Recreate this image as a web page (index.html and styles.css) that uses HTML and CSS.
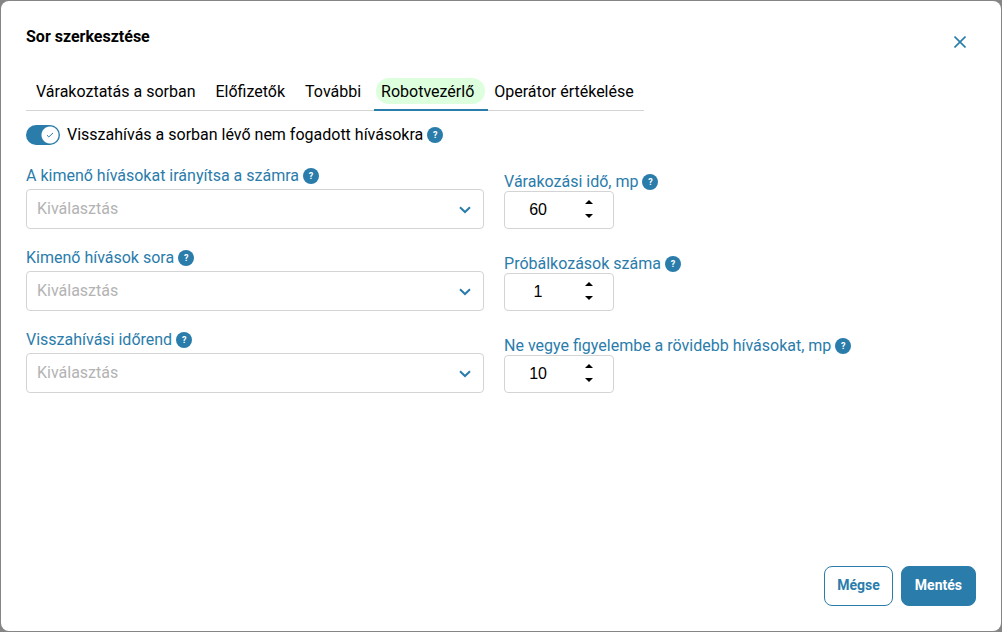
FILE: index.html
```html
<!DOCTYPE html>
<html lang="hu">
  <head>
    <meta charset="utf-8">
    <meta name="viewport" content="width=device-width,initial-scale=1">
    <title>Sor szerkesztése</title>
    <link rel="stylesheet" href="styles.css">
  </head>
  <body>
    <form class="dialog" role="dialog" aria-labelledby="dialog-title">
      <header class="dialog-header">
        <h1 class="dialog-title" id="dialog-title">Sor szerkesztése</h1>
        <button class="close" type="button" aria-label="Bezárás">
          <svg width="12" height="12" viewBox="0 0 12 12"><path d="M.5.5l11 11M11.5.5l-11 11"/></svg>
        </button>
      </header>

      <nav class="tabs" role="tablist">
        <button class="tab" type="button" role="tab">Várakoztatás a sorban</button>
        <button class="tab" type="button" role="tab">Előfizetők</button>
        <button class="tab" type="button" role="tab">További</button>
        <button class="tab tab-active" type="button" role="tab" aria-selected="true"><span class="tab-pill">Robotvezérlő</span></button>
        <button class="tab" type="button" role="tab">Operátor értékelése</button>
      </nav>

      <div class="toggle-row">
        <input class="toggle" type="checkbox" id="callback" checked>
        <svg class="toggle-check" width="8" height="6" viewBox="0 0 8 6"><path d="M1 3.2l1.8 1.7L7 1"/></svg>
        <label for="callback">Visszahívás a sorban lévő nem fogadott hívásokra</label>
        <button class="help" type="button" aria-label="Súgó">?</button>
      </div>

      <div class="fields">
        <div class="field">
          <div class="field-label">
            <label for="number">A kimenő hívásokat irányítsa a számra</label>
            <button class="help" type="button" aria-label="Súgó">?</button>
          </div>
          <div class="select">
            <select id="number"><option>Kiválasztás</option></select>
            <svg class="chevron" width="12" height="8" viewBox="0 0 12 8"><path d="M1 1.2l5 4.8 5-4.8"/></svg>
          </div>
        </div>
        <div class="field field-number">
          <div class="field-label">
            <label for="wait">Várakozási idő, mp</label>
            <button class="help" type="button" aria-label="Súgó">?</button>
          </div>
          <div class="stepper">
            <input type="number" id="wait" value="60">
            <div class="stepper-buttons">
              <button class="step step-up" type="button" aria-label="Növelés"></button>
              <button class="step step-down" type="button" aria-label="Csökkentés"></button>
            </div>
          </div>
        </div>

        <div class="field">
          <div class="field-label">
            <label for="queue">Kimenő hívások sora</label>
            <button class="help" type="button" aria-label="Súgó">?</button>
          </div>
          <div class="select">
            <select id="queue"><option>Kiválasztás</option></select>
            <svg class="chevron" width="12" height="8" viewBox="0 0 12 8"><path d="M1 1.2l5 4.8 5-4.8"/></svg>
          </div>
        </div>
        <div class="field field-number">
          <div class="field-label">
            <label for="attempts">Próbálkozások száma</label>
            <button class="help" type="button" aria-label="Súgó">?</button>
          </div>
          <div class="stepper">
            <input type="number" id="attempts" value="1">
            <div class="stepper-buttons">
              <button class="step step-up" type="button" aria-label="Növelés"></button>
              <button class="step step-down" type="button" aria-label="Csökkentés"></button>
            </div>
          </div>
        </div>

        <div class="field">
          <div class="field-label">
            <label for="schedule">Visszahívási időrend</label>
            <button class="help" type="button" aria-label="Súgó">?</button>
          </div>
          <div class="select">
            <select id="schedule"><option>Kiválasztás</option></select>
            <svg class="chevron" width="12" height="8" viewBox="0 0 12 8"><path d="M1 1.2l5 4.8 5-4.8"/></svg>
          </div>
        </div>
        <div class="field field-number">
          <div class="field-label">
            <label for="ignore">Ne vegye figyelembe a rövidebb hívásokat, mp</label>
            <button class="help" type="button" aria-label="Súgó">?</button>
          </div>
          <div class="stepper">
            <input type="number" id="ignore" value="10">
            <div class="stepper-buttons">
              <button class="step step-up" type="button" aria-label="Növelés"></button>
              <button class="step step-down" type="button" aria-label="Csökkentés"></button>
            </div>
          </div>
        </div>
      </div>

      <footer class="dialog-footer">
        <button class="button" type="button">Mégse</button>
        <button class="button button-primary" type="submit">Mentés</button>
      </footer>
    </form>
    <script>
      for (let stepper of document.querySelectorAll('.stepper')) {
        let input = stepper.querySelector('input');
        stepper.querySelector('.step-up').onclick = () => input.stepUp();
        stepper.querySelector('.step-down').onclick = () => input.stepDown();
      }
    </script>
  </body>
</html>
```

FILE: styles.css
```css
:root {
  --blue: #2a7cab;
  --line: #d4d4d4;
}

* {
  box-sizing: border-box;
}

body {
  background: #858585;
  color: #000;
  font-family: Roboto, sans-serif;
  font-size: 16px;
  line-height: 20px;
  margin: 0;
  min-height: 100vh;
  display: flex;
  padding: 1px;
}

button,
input,
select {
  font: inherit;
  color: inherit;
  margin: 0;
}

button {
  background: none;
  border: 0;
  cursor: pointer;
  padding: 0;
}

svg {
  fill: none;
  stroke: var(--blue);
}

.dialog {
  background: #fff;
  border-radius: 8px;
  display: flex;
  flex: 1;
  flex-direction: column;
  padding: 25px;
}

.dialog-header {
  display: flex;
  align-items: flex-start;
  justify-content: space-between;
}

.dialog-title {
  font-size: 16px;
  font-weight: 700;
  line-height: 22px;
  margin: 0;
}

.close {
  display: flex;
  padding: 10px;
}

.close path {
  stroke-width: 1.6;
}

.tabs {
  align-self: flex-start;
  border-bottom: 1px solid var(--line);
  display: flex;
  margin-top: 16px;
}

.tab {
  height: 36px;
  padding: 0 10px;
  white-space: nowrap;
}

.tab-active {
  border-bottom: 2px solid var(--blue);
  height: 37px;
  margin: 0 0 -1px 3px;
  padding: 0 3px 1px 2px;
}

.tab-active + .tab {
  padding-left: 6px;
}

.tab-pill {
  background: #dfd;
  border-radius: 13px;
  display: block;
  line-height: 24px;
  padding: 2px 11px 0 5px;
}

.toggle-row {
  align-items: center;
  display: flex;
  margin-top: 14px;
  position: relative;
}

.toggle {
  appearance: none;
  background: radial-gradient(circle at 24px 10px, #fff 8px, var(--blue) 9px);
  border-radius: 10px;
  height: 20px;
  margin-right: 7px;
  width: 34px;
}

.toggle:not(:checked) {
  background: radial-gradient(circle at 10px 10px, #fff 8px, #aaa 9px);
}

.toggle-check {
  left: 20px;
  pointer-events: none;
  position: absolute;
  top: 7px;
}

.help {
  background: var(--blue);
  border-radius: 50%;
  color: #fff;
  flex: none;
  font-size: 9px;
  font-weight: 700;
  height: 16px;
  line-height: 16px;
  margin-left: 4px;
  width: 16px;
}

.fields {
  display: grid;
  gap: 20px;
  grid-template-columns: 33fr 34fr;
  margin-top: 22px;
}

.field {
  display: flex;
  flex-direction: column;
  gap: 4px;
  justify-content: flex-end;
}

.field-number {
  gap: 0;
}

.field-label {
  align-items: center;
  color: var(--blue);
  display: flex;
  line-height: 18px;
}

.select {
  position: relative;
}

.select select {
  appearance: none;
  background: #fff;
  border: 1px solid var(--line);
  border-radius: 4px;
  color: #b3b3b3;
  height: 40px;
  padding: 0 40px 0 10px;
  width: 100%;
}

.chevron {
  pointer-events: none;
  position: absolute;
  right: 13px;
  top: 17px;
}

.chevron path {
  stroke-width: 2;
}

.stepper {
  border: 1px solid var(--line);
  border-radius: 4px;
  display: flex;
  height: 38px;
  width: 110px;
}

.stepper input {
  appearance: textfield;
  background: none;
  border: 0;
  font-family: "Liberation Sans", sans-serif;
  padding: 0;
  text-align: center;
  width: 66px;
}

.stepper input::-webkit-inner-spin-button {
  appearance: none;
  margin: 0;
}

.stepper-buttons {
  display: flex;
  flex-direction: column;
  justify-content: center;
  padding: 0 0 2px 10px;
}

.step {
  display: flex;
  height: 14px;
  justify-content: center;
  align-items: center;
  width: 16px;
}

.step::before {
  border: 4px solid transparent;
  content: "";
}

.step-up::before {
  border-bottom-color: #000;
  border-top: 0;
}

.step-down::before {
  border-bottom: 0;
  border-top-color: #000;
}

.dialog-footer {
  display: flex;
  gap: 8px;
  justify-content: flex-end;
  margin-top: auto;
}

.button {
  border: 1px solid var(--blue);
  border-radius: 8px;
  color: var(--blue);
  font-size: 14px;
  font-weight: 700;
  height: 40px;
  padding: 0 12px 2px;
}

.button-primary {
  background: var(--blue);
  color: #fff;
  padding: 0 13px 2px;
}
```
